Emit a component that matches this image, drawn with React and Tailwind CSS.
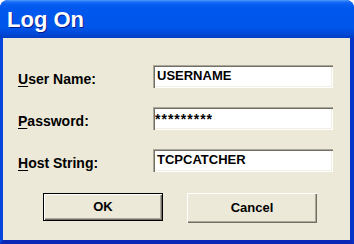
export default function App() {
  const font = { fontFamily: '"Liberation Sans", Arial, sans-serif' };
  const rows = [
    { u: "U", rest: "ser Name:", value: "USERNAME" },
    { u: "P", rest: "assword:", value: "*********", pw: true },
    { u: "H", rest: "ost String:", value: "TCPCATCHER" },
  ];
  return (
    <div className="w-[354px] h-[244px] bg-white" style={font}>
      <div className="w-[354px] h-[244px] flex flex-col rounded-t-[8px] overflow-hidden bg-[#0a3ad6]">
        <div className="h-[38px] shrink-0 bg-[linear-gradient(to_bottom,#4a9cff_0px,#1a6cf7_2px,#0760f3_4px,#0058ee_8px,#0055ea_28px,#0049d9_33px,#003dc6_38px)]">
          <div className="pl-[7px] pt-[9px] text-[22px] leading-[22px] font-bold text-white [text-shadow:1px_1px_0_#0a1a8a]">
            Log On
          </div>
        </div>
        <div className="flex-1 flex border-l-[3px] border-r-[4px] border-b-[4px] border-l-[#0645dd] border-r-[#0634c8] border-b-[#0a27b5] bg-[#ece9d8]">
          <div className="flex-1 flex flex-col pt-[27px]">
            <div className="flex flex-col gap-[19px] pl-[15px]">
              {rows.map((r) => (
                <div key={r.u} className="flex items-start">
                  <div className="w-[135px] mt-[7px] text-[14px] leading-[14px] font-bold text-black">
                    <span className="underline underline-offset-[2px]">{r.u}</span>
                    {r.rest}
                  </div>
                  <div className="w-[180px] h-[23px] bg-white shadow-[inset_1px_1px_0_#aca899,inset_2px_2px_0_#716f64,inset_-1px_-1px_0_#ffffff,inset_-2px_-2px_0_#f1efe2]">
                    {r.pw ? (
                      <div className="pl-[2px] pt-[5px] text-[14px] leading-[14px] font-bold text-black tracking-[1px]">
                        {r.value}
                      </div>
                    ) : (
                      <div className="pl-[4px] pt-[4px] text-[13px] leading-[13px] font-bold text-black">
                        {r.value}
                      </div>
                    )}
                  </div>
                </div>
              ))}
            </div>
            <div className="flex items-start gap-[24px] pl-[40px] mt-[21px]">
              <div className="w-[120px] h-[28px] border border-black flex items-center justify-center bg-[#ece9d8] shadow-[inset_1px_1px_0_#ffffff,inset_-1px_-1px_0_#716f64,inset_-2px_-2px_0_#aca899] text-[13px] font-bold text-black">
                OK
              </div>
              <div className="w-[130px] h-[30px] flex items-center justify-center bg-[#ece9d8] shadow-[inset_1px_1px_0_#ffffff,inset_-1px_-1px_0_#716f64,inset_-2px_-2px_0_#aca899] text-[13px] font-bold text-black">
                Cancel
              </div>
            </div>
          </div>
        </div>
      </div>
    </div>
  );
}
